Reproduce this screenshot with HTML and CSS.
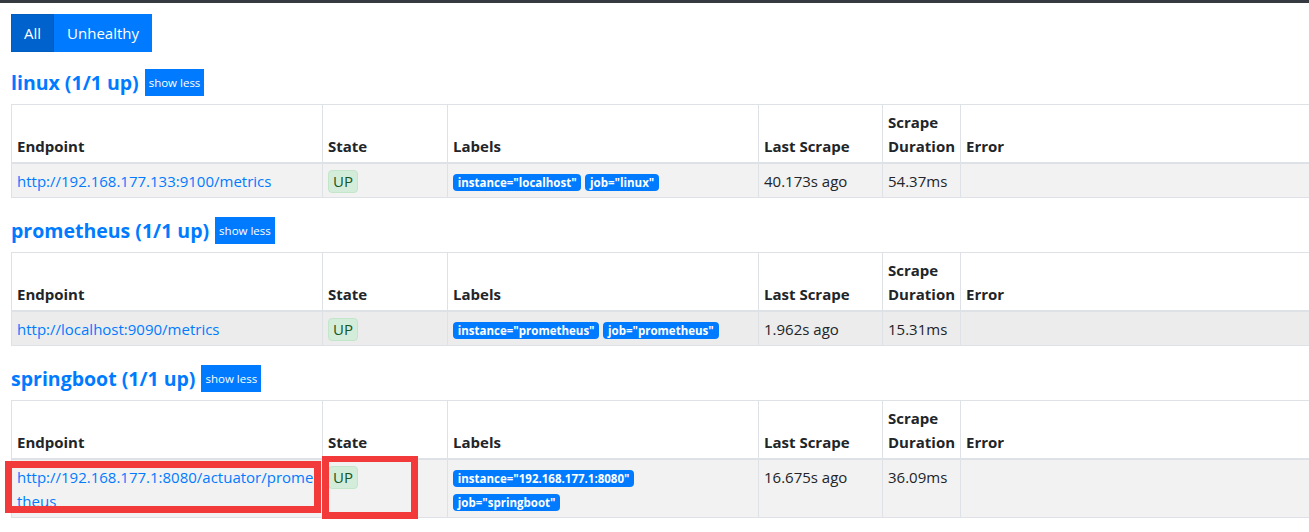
FILE: index.html
```html
<!DOCTYPE html>
<html lang="en">
<head>
<meta charset="utf-8">
<title>Targets</title>
<link rel="stylesheet" href="styles.css">
</head>
<body>
<div class="topbar"></div>
<main class="page">
  <div class="btn-group">
    <button class="btn btn-active">All</button>
    <button class="btn">Unhealthy</button>
  </div>

  <section class="job">
    <div class="job-head">
      <h2><a href="#linux">linux (1/1 up)</a></h2>
      <button class="btn-xs">show less</button>
    </div>
    <table class="targets">
      <colgroup>
        <col class="c-endpoint"><col class="c-state"><col class="c-labels"><col class="c-last"><col class="c-dur"><col class="c-err">
      </colgroup>
      <thead>
        <tr><th>Endpoint</th><th>State</th><th>Labels</th><th>Last Scrape</th><th>Scrape Duration</th><th>Error</th></tr>
      </thead>
      <tbody>
        <tr>
          <td><a href="#">http://192.168.177.133:9100/metrics</a></td>
          <td><span class="state">UP</span></td>
          <td><span class="badge">instance="localhost"</span> <span class="badge">job="linux"</span></td>
          <td>40.173s ago</td>
          <td>54.37ms</td>
          <td></td>
        </tr>
      </tbody>
    </table>
  </section>

  <section class="job">
    <div class="job-head">
      <h2><a href="#prometheus">prometheus (1/1 up)</a></h2>
      <button class="btn-xs">show less</button>
    </div>
    <table class="targets">
      <colgroup>
        <col class="c-endpoint"><col class="c-state"><col class="c-labels"><col class="c-last"><col class="c-dur"><col class="c-err">
      </colgroup>
      <thead>
        <tr><th>Endpoint</th><th>State</th><th>Labels</th><th>Last Scrape</th><th>Scrape Duration</th><th>Error</th></tr>
      </thead>
      <tbody>
        <tr class="hover">
          <td><a href="#">http://localhost:9090/metrics</a></td>
          <td><span class="state">UP</span></td>
          <td><span class="badge">instance="prometheus"</span> <span class="badge">job="prometheus"</span></td>
          <td>1.962s ago</td>
          <td>15.31ms</td>
          <td></td>
        </tr>
      </tbody>
    </table>
  </section>

  <section class="job">
    <div class="job-head">
      <h2><a href="#springboot">springboot (1/1 up)</a></h2>
      <button class="btn-xs">show less</button>
    </div>
    <table class="targets">
      <colgroup>
        <col class="c-endpoint"><col class="c-state"><col class="c-labels"><col class="c-last"><col class="c-dur"><col class="c-err">
      </colgroup>
      <thead>
        <tr><th>Endpoint</th><th>State</th><th>Labels</th><th>Last Scrape</th><th>Scrape Duration</th><th>Error</th></tr>
      </thead>
      <tbody>
        <tr>
          <td class="endpoint"><a href="#">http://192.168.177.1:8080/actuator/prometheus</a></td>
          <td><span class="state">UP</span></td>
          <td><span class="badge">instance="192.168.177.1:8080"</span><br><span class="badge">job="springboot"</span></td>
          <td>16.675s ago</td>
          <td>36.09ms</td>
          <td></td>
        </tr>
      </tbody>
    </table>
  </section>
</main>
<div class="mark mark-endpoint"></div>
<div class="mark mark-state"></div>
</body>
</html>
```
FILE: styles.css
```css
html, body {
  margin: 0;
  padding: 0;
  overflow: hidden;
  background: #fff;
}
body {
  font-family: "Open Sans", "Noto Sans", sans-serif;
  font-size: 15px;
  line-height: 24px;
  color: #212529;
  position: relative;
  width: 1309px;
  height: 532px;
}
.topbar {
  height: 3px;
  background: #343a40;
}
.page {
  padding: 11px 0 0 11px;
}
.btn-group {
  display: flex;
  margin-bottom: 17px;
}
.btn {
  font-family: inherit;
  font-size: 15px;
  line-height: 24px;
  padding: 6px 12px;
  border: 1px solid #007bff;
  background: #007bff;
  color: #fff;
  border-radius: 0;
  margin: 0;
}
.btn-active {
  background: #0062cc;
  border-color: #005cbf;
}
.job {
  margin-bottom: 19px;
}
.job-head {
  display: flex;
  align-items: center;
  height: 27px;
  margin-bottom: 8px;
}
.job-head h2 {
  margin: 0 6px 0 0;
  font-size: 19.5px;
  font-weight: 700;
  line-height: 27px;
}
.job-head h2 a {
  color: #007bff;
  text-decoration: none;
}
.btn-xs {
  font-family: inherit;
  font-size: 11.5px;
  line-height: 19px;
  padding: 4px 4px;
  border: 0;
  background: #007bff;
  color: #fff;
  border-radius: 0;
}
.targets {
  border-collapse: collapse;
  table-layout: fixed;
  width: 1340px;
  border: 1px solid #dee2e6;
}
.c-endpoint { width: 311px; }
.c-state { width: 125px; }
.c-labels { width: 311px; }
.c-last { width: 124px; }
.c-dur { width: 78px; }
.c-err { width: auto; }
.targets th,
.targets td {
  padding: 4.5px 5px;
  border: 1px solid #dee2e6;
  text-align: left;
}
.targets th {
  vertical-align: bottom;
  font-weight: 700;
  border-bottom-width: 2px;
  color: #212529;
}
.targets td {
  vertical-align: top;
}
.targets tbody tr {
  background: #f2f2f2;
}
.targets tbody tr.hover {
  background: #ececec;
}
.targets td a {
  color: #007bff;
  text-decoration: none;
}
.endpoint {
  word-break: break-all;
}
.state {
  display: inline-block;
  background: #d4edda;
  border: 1px solid #c3e6cb;
  color: #155724;
  border-radius: 4px;
  padding: 0 4px;
  line-height: 21px;
}
.badge {
  display: inline-block;
  background: #007bff;
  color: #fff;
  font-size: 11.5px;
  font-weight: 700;
  line-height: 1;
  padding: 3px 4.8px;
  border-radius: 4px;
  vertical-align: baseline;
  white-space: nowrap;
}
.mark {
  position: absolute;
  box-sizing: border-box;
  border: 7px solid #f23a3a;
}
.mark-endpoint {
  left: 5px;
  top: 461px;
  width: 316px;
  height: 52px;
}
.mark-state {
  left: 322px;
  top: 456px;
  width: 96px;
  height: 63px;
  border-width: 6px 7px 7px 7px;
}
```
